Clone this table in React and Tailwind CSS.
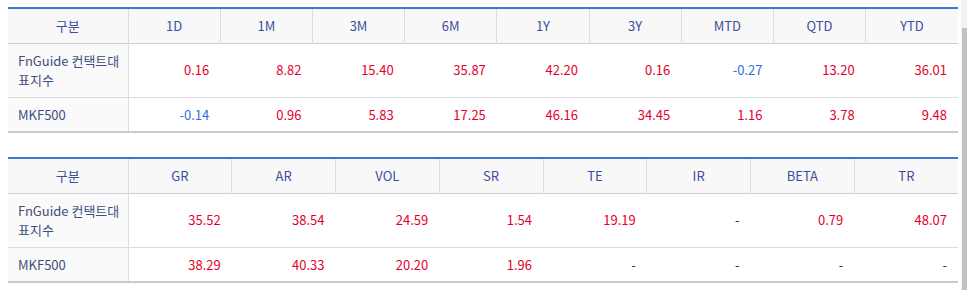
import React from "react";

const RED = "text-[#e5002a]";
const BLUE = "text-[#2c6fe0]";

function valClass(v) {
  if (v === "-") return "text-[#333333]";
  if (v.startsWith("-")) return BLUE;
  return RED;
}

function DataTable({ headers, rows, colWidth }) {
  return (
    <table className="w-full table-fixed border-collapse border-t-2 border-t-[#3a78d2] border-b-2 border-b-[#c8cad2]">
      <colgroup>
        <col className="w-[120px]" />
        {headers.map((h) => (
          <col key={h} style={{ width: colWidth }} />
        ))}
      </colgroup>
      <thead>
        <tr className="bg-[#f8f8f8] border-b border-b-[#cdcdd3]">
          <th className="h-[35px] font-normal text-center text-[#3d4e9d] border-r border-r-[#dddddd]">구분</th>
          {headers.map((h, i) => (
            <th
              key={h}
              className={
                "h-[35px] font-normal text-center text-[#3d4e9d] " +
                (i < headers.length - 1 ? "border-r border-r-[#dddddd]" : "")
              }
            >
              {h}
            </th>
          ))}
        </tr>
      </thead>
      <tbody>
        {rows.map((r, ri) => (
          <tr key={ri} className={ri < rows.length - 1 ? "border-b border-b-[#dddddd]" : ""}>
            <td
              className={
                "bg-[#fafafa] text-left pl-[10px] pr-[8px] leading-[19px] text-[#3f4f80] border-r border-r-[#dddddd] " +
                (r.tall ? "h-[54px]" : "h-[35px]")
              }
            >
              {r.name}
            </td>
            {r.values.map((v, vi) => (
              <td key={vi} className={"text-right pr-[11px] " + valClass(v)}>
                {v}
              </td>
            ))}
          </tr>
        ))}
      </tbody>
    </table>
  );
}

export default function App() {
  const h1 = ["1D", "1M", "3M", "6M", "1Y", "3Y", "MTD", "QTD", "YTD"];
  const r1 = [
    {
      name: "FnGuide 컨택트대표지수",
      tall: true,
      values: ["0.16", "8.82", "15.40", "35.87", "42.20", "0.16", "-0.27", "13.20", "36.01"],
    },
    {
      name: "MKF500",
      values: ["-0.14", "0.96", "5.83", "17.25", "46.16", "34.45", "1.16", "3.78", "9.48"],
    },
  ];
  const h2 = ["GR", "AR", "VOL", "SR", "TE", "IR", "BETA", "TR"];
  const r2 = [
    {
      name: "FnGuide 컨택트대표지수",
      tall: true,
      values: ["35.52", "38.54", "24.59", "1.54", "19.19", "-", "0.79", "48.07"],
    },
    {
      name: "MKF500",
      values: ["38.29", "40.33", "20.20", "1.96", "-", "-", "-", "-"],
    },
  ];
  return (
    <div
      className="flex w-[967px] h-[290px] overflow-hidden bg-white text-[13px]"
      style={{ fontFamily: '"Noto Sans CJK KR", "Noto Sans", sans-serif' }}
    >
      <div className="w-[961px] pl-[8px] pr-[3px] pt-[7px] flex flex-col gap-[24px]">
        <DataTable headers={h1} rows={r1} colWidth="92.2px" />
        <DataTable headers={h2} rows={r2} colWidth="103.75px" />
      </div>
      <div className="w-[6px] h-full bg-[#f1f1f1] pt-[28px] flex justify-center">
        <div className="w-[5px] h-full bg-[#c1c1c1]" />
      </div>
    </div>
  );
}
